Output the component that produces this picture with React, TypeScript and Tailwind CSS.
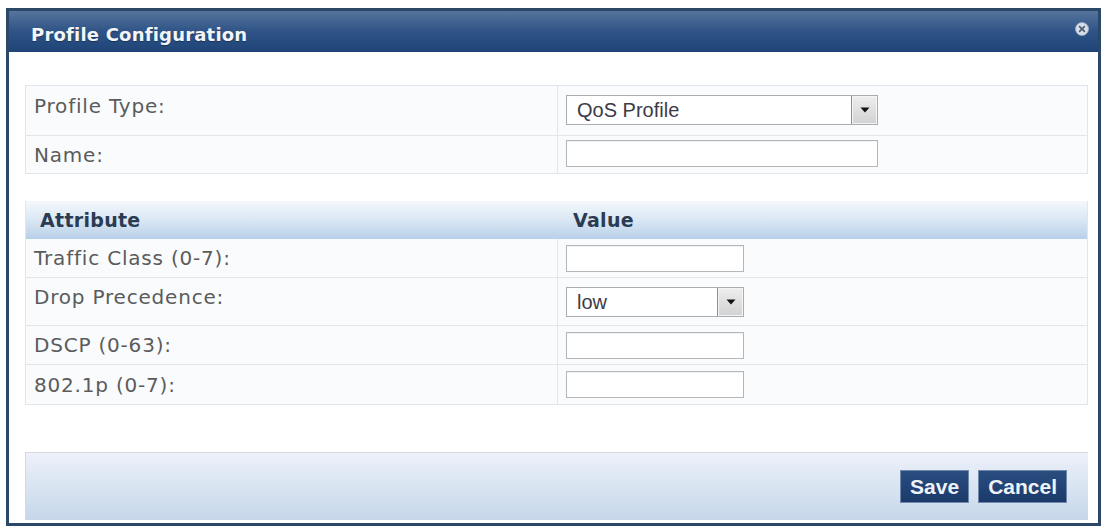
import React from "react";

// ─── SMALL PIECES ──────────────────────────────────────────────────────────────
function CloseIcon() {
  return (
    <svg width="14" height="14" viewBox="0 0 14 14">
      <circle cx="7" cy="7" r="6.5" fill="#d6dde6" stroke="#9fb0c4" strokeWidth="0.8" />
      <path d="M4.6 4.6 L9.4 9.4 M9.4 4.6 L4.6 9.4" stroke="#4a5d74" strokeWidth="1.6" strokeLinecap="round" />
    </svg>
  );
}

function TextBox({ w }: { w: string }) {
  return <div className={`${w} h-[27px] bg-white border border-[#b4b7ba] shadow-[inset_0_1px_1px_rgba(0,0,0,0.06)]`} />;
}

function Select({ w, value }: { w: string; value: string }) {
  return (
    <div className={`${w} h-[30px] flex items-stretch bg-white border border-[#a9acb0]`}>
      <span className="flex-1 flex items-center pl-[10px] text-[20px] text-[#3d3a48]" style={{ fontFamily: '"Liberation Sans", Arial, sans-serif' }}>
        {value}
      </span>
      <span className="w-[26px] flex items-center justify-center bg-gradient-to-b from-[#eeeeee] to-[#d2d2d2] border-l border-[#8d8f92] shadow-[inset_0_0_0_1px_#f4f4f4]">
        <svg width="10" height="6" viewBox="0 0 10 6"><path d="M0.5 0.5 H9.5 L5 5.5 Z" fill="#111" /></svg>
      </span>
    </div>
  );
}

const LABEL = "text-[#5b5b5b] text-[20px] tracking-[0.8px]";

// ─── MAIN APP ──────────────────────────────────────────────────────────────────
export default function App() {
  const attrs: { label: string; h: string; kind: "input" | "select"; top?: boolean }[] = [
    { label: "Traffic Class (0-7):", h: "h-[39px]", kind: "input" },
    { label: "Drop Precedence:", h: "h-[48px]", kind: "select", top: true },
    { label: "DSCP (0-63):", h: "h-[39px]", kind: "input" },
    { label: "802.1p (0-7):", h: "h-[39px]", kind: "input" },
  ];

  return (
    <div className="w-[1103px] h-[526px] bg-white pl-[6px] pt-[8px]" style={{ fontFamily: '"DejaVu Sans", Verdana, sans-serif' }}>
      <div className="w-[1095px] h-[518px] flex flex-col border-[3px] border-[#2c4868] bg-white">
        {/* Title bar */}
        <div className="h-[41px] flex items-center justify-between pl-[22px] pr-[9px] bg-gradient-to-b from-[#56749c] via-[#2e5386] to-[#1f4578] flex-shrink-0">
          <span className="text-[18px] font-bold tracking-[0.2px] text-[#f2f5f9] [text-shadow:0_1px_1px_rgba(0,0,0,0.35)] pt-[5px]">Profile Configuration</span>
          <span className="pb-[6px]"><CloseIcon /></span>
        </div>

        {/* Body */}
        <div className="flex-1 flex flex-col pl-[16px] pr-[10px] pt-[33px]">
          {/* Profile table */}
          <div className="border border-[#e1e6ec] bg-[#f9fbfd]">
            <div className="h-[50px] flex border-b border-[#e1e6ec]">
              <div className={`w-[532px] pl-[8px] pt-[8px] leading-[24px] border-r border-[#e1e6ec] ${LABEL}`}>Profile Type:</div>
              <div className="flex-1 pl-[8px] pt-[9px]"><Select w="w-[312px]" value="QoS Profile" /></div>
            </div>
            <div className="h-[37px] flex">
              <div className={`w-[532px] pl-[8px] flex items-center leading-[24px] border-r border-[#e1e6ec] ${LABEL}`}>Name:</div>
              <div className="flex-1 pl-[8px] pt-[4px]"><TextBox w="w-[312px]" /></div>
            </div>
          </div>

          {/* Attribute table */}
          <div className="mt-[27px] border border-[#e1e6ec] border-t-0 bg-[#f9fbfd]">
            <div className="h-[38px] flex items-center bg-gradient-to-b from-[#f4f8fc] via-[#dae7f4] to-[#b9d0e8] text-[19px] tracking-[0.3px] font-bold text-[#2b3b52]">
              <div className="w-[532px] pl-[14px]">Attribute</div>
              <div className="flex-1 pl-[15px]">Value</div>
            </div>
            {attrs.map((a, i) => (
              <div key={a.label} className={`${a.h} flex ${i < attrs.length - 1 ? "border-b border-[#e1e6ec]" : ""}`}>
                <div className={`w-[532px] pl-[8px] leading-[24px] border-r border-[#e1e6ec] flex ${a.top ? "items-start pt-[7px]" : "items-center"} ${LABEL}`}>
                  {a.label}
                </div>
                <div className={`flex-1 pl-[8px] flex ${a.top ? "items-start pt-[9px]" : "items-center"}`}>
                  {a.kind === "select" ? <Select w="w-[178px]" value="low" /> : <TextBox w="w-[178px]" />}
                </div>
              </div>
            ))}
          </div>

          {/* Footer */}
          <div className="mt-[47px] h-[68px] flex items-center justify-end gap-[9px] pr-[21px] border-t border-l border-[#d3d9e1] bg-gradient-to-b from-[#eef1fa] via-[#d9e4f1] to-[#c6d7ea]">
            {["Save", "Cancel"].map(b => (
              <button key={b}
                className="h-[33px] px-[9px] bg-gradient-to-b from-[#2a4d80] to-[#1b3a6a] border border-[#6f89ad] text-[21px] font-bold text-[#eef3f9] leading-none"
                style={{ fontFamily: '"Liberation Sans", Arial, sans-serif' }}>
                {b}
              </button>
            ))}
          </div>
        </div>
      </div>
    </div>
  );
}
